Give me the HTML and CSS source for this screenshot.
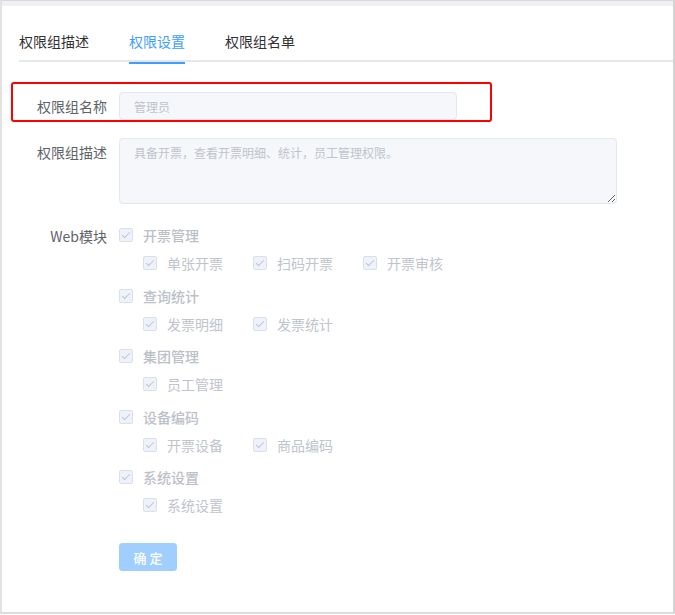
FILE: index.html
```html
<!DOCTYPE html>
<html lang="zh-CN">
<head>
<meta charset="utf-8">
<title>权限设置</title>
<link rel="stylesheet" href="styles.css">
</head>
<body>
<div class="frame">
  <div class="strip"></div>
  <div class="panel">
    <div class="tabs">
      <div class="tab">权限组描述</div>
      <div class="tab active">权限设置</div>
      <div class="tab">权限组名单</div>
      <div class="tab-fill"></div>
    </div>

    <form class="form">
      <div class="form-item highlighted">
        <label class="label">权限组名称</label>
        <div class="control">
          <input class="input" type="text" placeholder="管理员" disabled>
        </div>
        <div class="annotation"></div>
      </div>

      <div class="form-item">
        <label class="label">权限组描述</label>
        <div class="control">
          <textarea class="textarea" placeholder="具备开票，查看开票明细、统计，员工管理权限。" readonly></textarea>
        </div>
      </div>

      <div class="form-item">
        <label class="label">Web模块</label>
        <div class="control modules">
          <div class="group">
            <div class="row"><span class="cb"></span><span class="cb-text top">开票管理</span></div>
            <div class="row sub">
              <span class="cb-item"><span class="cb"></span><span class="cb-text">单张开票</span></span>
              <span class="cb-item"><span class="cb"></span><span class="cb-text">扫码开票</span></span>
              <span class="cb-item"><span class="cb"></span><span class="cb-text">开票审核</span></span>
            </div>
          </div>
          <div class="group">
            <div class="row"><span class="cb"></span><span class="cb-text top">查询统计</span></div>
            <div class="row sub">
              <span class="cb-item"><span class="cb"></span><span class="cb-text">发票明细</span></span>
              <span class="cb-item"><span class="cb"></span><span class="cb-text">发票统计</span></span>
            </div>
          </div>
          <div class="group">
            <div class="row"><span class="cb"></span><span class="cb-text top">集团管理</span></div>
            <div class="row sub">
              <span class="cb-item"><span class="cb"></span><span class="cb-text">员工管理</span></span>
            </div>
          </div>
          <div class="group">
            <div class="row"><span class="cb"></span><span class="cb-text top">设备编码</span></div>
            <div class="row sub">
              <span class="cb-item"><span class="cb"></span><span class="cb-text">开票设备</span></span>
              <span class="cb-item"><span class="cb"></span><span class="cb-text">商品编码</span></span>
            </div>
          </div>
          <div class="group">
            <div class="row"><span class="cb"></span><span class="cb-text top">系统设置</span></div>
            <div class="row sub">
              <span class="cb-item"><span class="cb"></span><span class="cb-text">系统设置</span></span>
            </div>
          </div>
        </div>
      </div>

      <div class="form-item actions">
        <div class="label"></div>
        <div class="control">
          <button class="btn" type="button" disabled>确 定</button>
        </div>
      </div>
    </form>
  </div>
</div>
</body>
</html>
```

FILE: styles.css
```css
* { box-sizing: border-box; }

html, body {
  margin: 0;
  padding: 0;
  background: #ffffff;
}

body {
  font-family: "Noto Sans CJK SC", "Liberation Sans", sans-serif;
  width: 675px;
  height: 615px;
  overflow: hidden;
}

.frame {
  width: 675px;
  height: 614px;
  border-top: 1px solid #dadada;
  border-left: 2px solid #e2e2e2;
  border-right: 2px solid #d4d4d4;
  border-bottom: 2px solid #dcdcdc;
  background: #ffffff;
  display: flex;
  flex-direction: column;
}

.strip {
  height: 5px;
  background: #eef0f5;
  flex: none;
}

.panel {
  flex: 1;
  position: relative;
}

/* Tabs */
.tabs {
  display: flex;
  margin-top: 16px;
  margin-left: 17px;
  border-bottom: 2px solid #e4e7ed;
  height: 40px;
}

.tab {
  position: relative;
  padding: 0 20px;
  height: 40px;
  line-height: 38px;
  font-size: 14px;
  color: #303133;
}

.tab:first-child { padding-left: 0; }

.tab.active { color: #409eff; }

.tab.active::after {
  content: "";
  position: absolute;
  left: 20px;
  right: 20px;
  bottom: -2px;
  height: 2px;
  background: #409eff;
}

.tab-fill { flex: 1; }

/* Form */
.form {
  margin-top: 30px;
  padding-left: 7px;
}

.form-item {
  display: flex;
  margin-bottom: 18px;
  position: relative;
}

.label {
  width: 110px;
  flex: none;
  padding-right: 12px;
  text-align: right;
  font-size: 14px;
  line-height: 28px;
  color: #606266;
}

.control {
  flex: none;
}

.input {
  display: block;
  width: 338px;
  height: 28px;
  padding: 0 14px;
  border: 1px solid #e4e7ed;
  border-radius: 4px;
  background: #f5f7fa;
  font-family: inherit;
  font-size: 12px;
  color: #c0c4cc;
  outline: none;
}

.input::placeholder,
.textarea::placeholder {
  color: #c0c4cc;
}

.textarea {
  display: block;
  width: 498px;
  height: 66px;
  padding: 5px 14px;
  border: 1px solid #e4e7ed;
  border-radius: 4px;
  background: #f5f7fa;
  font-family: inherit;
  font-size: 12px;
  line-height: 18px;
  color: #c0c4cc;
  resize: vertical;
  outline: none;
}

.annotation {
  position: absolute;
  left: 2px;
  top: -10px;
  width: 481px;
  height: 40px;
  border: 2px solid #ff0000;
  border-radius: 3px;
  pointer-events: none;
}

/* Checkboxes */
.modules {
  display: flex;
  flex-direction: column;
  margin-top: -1px;
}

.group {
  margin-bottom: 4.5px;
}

.group:last-child { margin-bottom: 0; }

.row {
  display: flex;
  align-items: center;
  height: 28px;
}

.row.sub {
  padding-left: 24px;
}

.cb-item {
  display: inline-flex;
  align-items: center;
  margin-right: 30px;
}

.cb {
  position: relative;
  display: inline-block;
  width: 14px;
  height: 14px;
  border: 1px solid #dcdfe6;
  border-radius: 2px;
  background: #edf2fc;
  flex: none;
}

.cb::after {
  content: "";
  position: absolute;
  left: 4px;
  top: 1px;
  width: 3px;
  height: 7px;
  border: 1px solid #c0c4cc;
  border-left: 0;
  border-top: 0;
  transform: rotate(45deg);
}

.cb-text {
  padding-left: 10px;
  font-size: 14px;
  line-height: 20px;
  color: #c0c4cc;
}

.cb-text.top {
  font-weight: 500;
  color: #bcc0c8;
}

/* Button */
.actions {
  margin-top: 24px;
}

.btn {
  width: 58px;
  height: 28px;
  padding: 0;
  border: 1px solid #a0cfff;
  border-radius: 3px;
  background: #a0cfff;
  color: #ffffff;
  font-family: inherit;
  font-size: 13px;
  font-weight: 500;
}
```
